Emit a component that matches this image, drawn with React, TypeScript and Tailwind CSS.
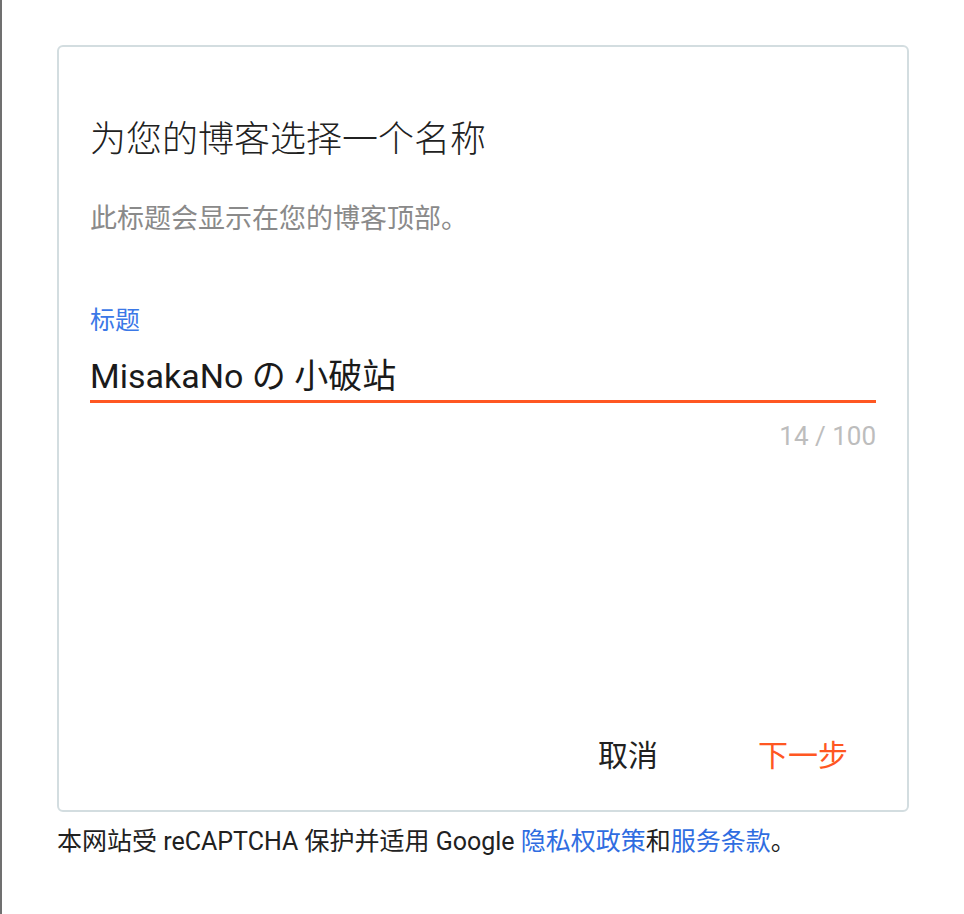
import React from "react";

export default function App() {
  const font = { fontFamily: 'Roboto, "Noto Sans CJK SC", sans-serif' };
  return (
    <div className="flex min-h-[914px] w-[964px] bg-white" style={font}>
      <div className="w-[2px] shrink-0 bg-[#707070]" />
      <div className="flex flex-col pl-[55px] pt-[45px]">
        <div className="flex h-[767px] w-[852px] flex-col rounded-[6px] border-2 border-[#d3dde0] bg-white px-[31px]">
          <h1 className="mt-[71px] text-[36px] font-light leading-[44px] text-[#212121]">为您的博客选择一个名称</h1>
          <p className="mt-[39px] text-[27px] leading-[36px] text-[#8a8a8a]">此标题会显示在您的博客顶部。</p>
          <label className="mt-[68px] text-[25px] leading-[32px] text-[#3b78e7]">标题</label>
          <div className="mt-[17px] border-b-[3px] border-[#ff5722] pb-[2px] text-[34px] leading-[44px] text-[#1a1a1a]">
            MisakaNo の 小破站
          </div>
          <div className="mt-[17px] text-right text-[26px] leading-[32px] text-[#bdbdbd]">14 / 100</div>
          <div className="flex-1" />
          <div className="mb-[34px] flex justify-end gap-[100px] pr-[28px] text-[30px] leading-[40px]">
            <button className="text-[#212121]">取消</button>
            <button className="text-[#ff5722]">下一步</button>
          </div>
        </div>
        <p className="mt-[14px] text-[25px] leading-[32px] text-[#212121]">
          本网站受 reCAPTCHA 保护并适用 Google <span className="text-[#2f6de1]">隐私权政策</span>和<span className="text-[#2f6de1]">服务条款</span>。
        </p>
      </div>
    </div>
  );
}
